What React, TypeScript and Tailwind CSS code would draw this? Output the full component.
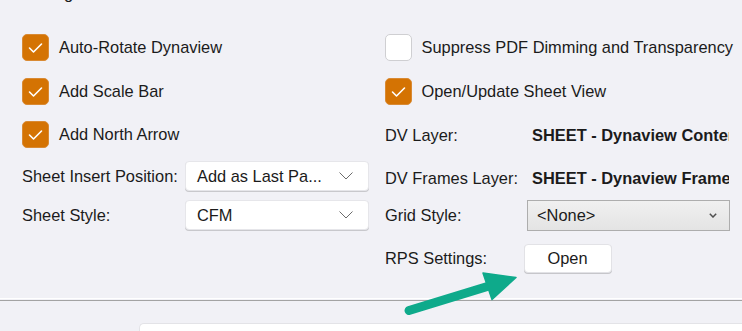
import React from "react"

const Check = ({ checked }: { checked: boolean }) =>
  checked ? (
    <div className="w-[27px] h-[27px] shrink-0 rounded-[5px] bg-[#d47303] border border-[#d98a33] flex items-center justify-center">
      <svg width="27" height="27" viewBox="0 0 27 27" className="-m-px">
        <polyline points="7.5,14 11.5,18 19.5,10" fill="none" stroke="#ffffff" strokeWidth="1.6" strokeLinecap="round" strokeLinejoin="round" />
      </svg>
    </div>
  ) : (
    <div className="w-[27px] h-[27px] shrink-0 rounded-[5px] bg-white border border-[#cfcfd2]" />
  )

const CheckRow = ({ checked, label }: { checked: boolean; label: string }) => (
  <div className="flex items-center gap-[10px]">
    <Check checked={checked} />
    <span className="whitespace-nowrap">{label}</span>
  </div>
)

const Dropdown = ({ value }: { value: string }) => (
  <div className="w-[184px] h-[30px] bg-white rounded-[4px] border border-[#e6e6ea] shadow-[0_1px_0_#c8c8cc] flex items-center justify-between pl-[11px] pr-[15px]">
    <span className="whitespace-nowrap">{value}</span>
    <svg width="14" height="8" viewBox="0 0 14 8">
      <polyline points="0.5,0.5 7,7 13.5,0.5" fill="none" stroke="#6b6b6b" strokeWidth="1" />
    </svg>
  </div>
)

export default () => {
  return (
    <div className="relative w-[742px] h-[331px] overflow-hidden bg-[#f1f1f6] text-[#1b1b1b] text-[16.4px] font-['Liberation_Sans',Arial,sans-serif]">
      <div className="pl-[22px] -mt-[15px] leading-[17px]">Settings</div>

      <div className="mt-[23.5px] pl-[22px] grid grid-cols-[362.5px_1fr] grid-rows-[44px_43px_44px_39px_39px_48px] items-center">
        <CheckRow checked={true} label="Auto-Rotate Dynaview" />
        <CheckRow checked={false} label="Suppress PDF Dimming and Transparency" />

        <CheckRow checked={true} label="Add Scale Bar" />
        <CheckRow checked={true} label="Open/Update Sheet View" />

        <CheckRow checked={true} label="Add North Arrow" />
        <div className="flex mt-[2px] pl-[0.5px]">
          <span className="w-[147px]">DV Layer:</span>
          <span className="w-[197px] overflow-hidden whitespace-nowrap font-bold">SHEET - Dynaview Content</span>
        </div>

        <div className="flex items-center">
          <span className="w-[163px] whitespace-nowrap">Sheet Insert Position:</span>
          <Dropdown value="Add as Last Pa..." />
        </div>
        <div className="flex mt-[4px] pl-[0.5px]">
          <span className="w-[147px] whitespace-nowrap">DV Frames Layer:</span>
          <span className="w-[197px] overflow-hidden whitespace-nowrap font-bold">SHEET - Dynaview Frames</span>
        </div>

        <div className="flex items-center">
          <span className="w-[163px]">Sheet Style:</span>
          <Dropdown value="CFM" />
        </div>
        <div className="flex items-center pl-[0.5px]">
          <span className="w-[142px]">Grid Style:</span>
          <div className="w-[203px] h-[31px] border border-[#adadad] bg-linear-to-b from-[#f0f0f0] to-[#e4e4e4] flex items-center justify-between pl-[9px] pr-[12px]">
            <span>&lt;None&gt;</span>
            <svg width="8" height="5" viewBox="0 0 8 5">
              <polyline points="0.8,0.8 4,4 7.2,0.8" fill="none" stroke="#505050" strokeWidth="1.5" />
            </svg>
          </div>
        </div>

        <div />
        <div className="flex items-center pl-[0.5px]">
          <span className="w-[138.5px]">RPS Settings:</span>
          <button className="w-[88px] h-[29px] bg-white rounded-[4px] border border-[#e2e2e6] shadow-[0_1px_0_#c6c6ca] flex items-center justify-center">
            Open
          </button>
        </div>
      </div>

      <div className="mt-[15.5px] h-px bg-white" />
      <div className="mt-px h-px bg-[#a3a3a3]" />
      <div className="mt-[22px] ml-[139px] h-[20px] bg-white rounded-tl-[5px] border-t border-l border-[#e3e3e7]" />

      <svg className="absolute left-0 top-0 pointer-events-none" width="742" height="331" viewBox="0 0 742 331">
        <line x1="409" y1="310.5" x2="489" y2="286" stroke="#0eaa8b" strokeWidth="9" strokeLinecap="round" />
        <polygon points="516,277.5 483,273 492,299.5" fill="#0eaa8b" stroke="#0eaa8b" strokeWidth="1.5" strokeLinejoin="round" />
      </svg>
    </div>
  )
}
